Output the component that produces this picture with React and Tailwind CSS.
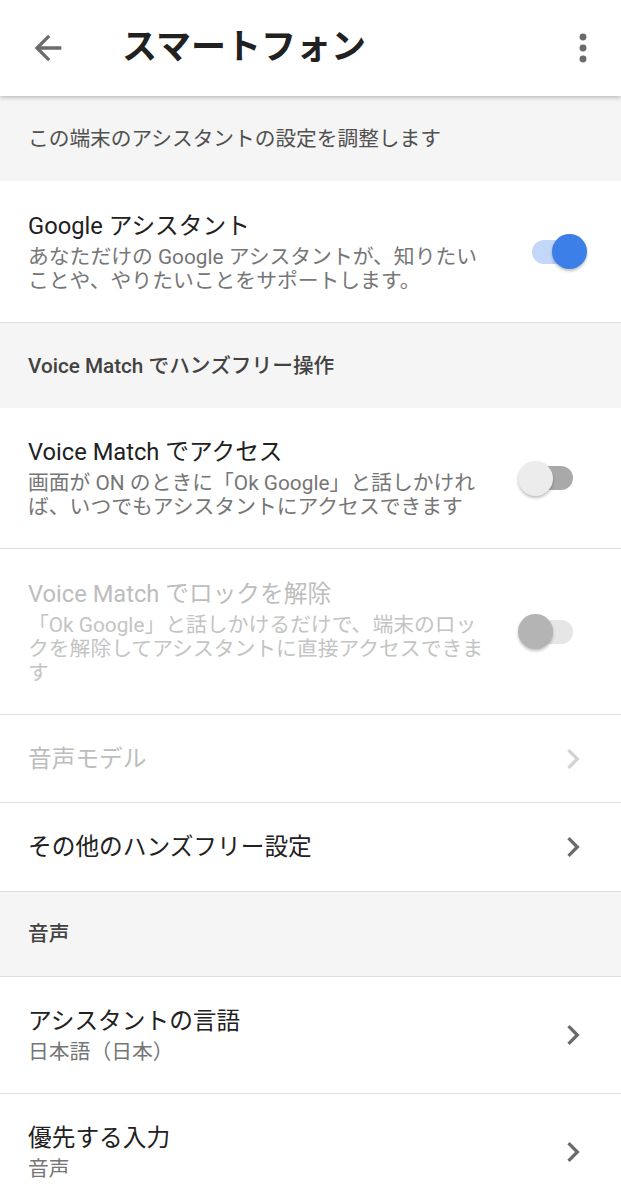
import React from "react";

const FONT = { fontFamily: 'Roboto, "Noto Sans CJK JP", "Noto Sans", sans-serif' };

function Toggle({ state }) {
  const track =
    state === "on" ? "bg-[#c3d7f9]" : state === "off" ? "bg-[#a9a9a9]" : "bg-[#e6e6e6]";
  const thumb =
    state === "on"
      ? "bg-[#3d7fe9] right-0"
      : state === "off"
      ? "bg-[#ececec] left-0"
      : "bg-[#b4b4b4] left-0";
  return (
    <div className="relative w-[69px] h-[35px] shrink-0 flex items-center">
      <div className={`mx-[14px] w-[41px] h-[24px] rounded-full ${track}`} />
      <div
        className={`absolute top-0 w-[35px] h-[35px] rounded-full shadow-[0_2px_3px_rgba(0,0,0,0.25)] ${thumb}`}
      />
    </div>
  );
}

function Chevron({ disabled }) {
  return (
    <svg
      width="40"
      height="40"
      viewBox="0 0 24 24"
      className={disabled ? "text-[#d2d2d2] shrink-0" : "text-[#6b6b6b] shrink-0"}
      fill="currentColor"
    >
      <path d="M10 6L8.59 7.41 13.17 12l-4.58 4.59L10 18l6-6z" />
    </svg>
  );
}

function Section({ children, medium, border }) {
  return (
    <div
      className={`h-[85px] bg-[#f5f5f5] flex items-center px-[28px] text-[20.7px] leading-[30px] ${
        medium ? "font-medium text-[#424242]" : "text-[#505050]"
      } ${border ? "border-b border-[#dedede]" : ""}`}
    >
      {children}
    </div>
  );
}

function Row({ h, title, lines, disabled, right }) {
  return (
    <div
      className={`${h} flex items-center justify-between border-b border-[#dedede] pl-[28px]`}
    >
      <div className="flex flex-col">
        <div
          className={`text-[23.7px] leading-[30px] whitespace-nowrap ${
            disabled ? "text-[#bdbdbd]" : "text-[#212121]"
          }`}
        >
          {title}
        </div>
        {lines && (
          <div
            className={`mt-[4px] text-[20.8px] leading-[24px] ${
              disabled ? "text-[#c4c4c4]" : "text-[#767676]"
            }`}
          >
            {lines.map((l, i) => (
              <div key={i} className="whitespace-nowrap">
                {l}
              </div>
            ))}
          </div>
        )}
      </div>
      {right}
    </div>
  );
}

export default function App() {
  return (
    <div className="w-[621px] h-[1200px] overflow-hidden bg-white" style={FONT}>
      <div className="relative z-10 h-[96px] bg-white flex items-center shadow-[0_2px_4px_rgba(0,0,0,0.22)]">
        <svg
          width="40"
          height="40"
          viewBox="0 0 24 24"
          className="ml-[28px] text-[#6b6b6b]"
          fill="currentColor"
        >
          <path d="M20 11H7.83l5.59-5.59L12 4l-8 8 8 8 1.41-1.41L7.83 13H20v-2z" />
        </svg>
        <div className="ml-[54px] text-[35px] leading-[40px] font-semibold text-[#212121] flex-1">
          スマートフォン
        </div>
        <svg
          width="44"
          height="44"
          viewBox="0 0 24 24"
          className="mr-[16px] text-[#6b6b6b]"
          fill="currentColor"
        >
          <circle cx="12" cy="6" r="1.9" />
          <circle cx="12" cy="12" r="1.9" />
          <circle cx="12" cy="18" r="1.9" />
        </svg>
      </div>

      <Section>この端末のアシスタントの設定を調整します</Section>

      <Row
        h="h-[142px]"
        title="Google アシスタント"
        lines={["あなただけの Google アシスタントが、知りたい", "ことや、やりたいことをサポートします。"]}
        right={
          <div className="pr-[34px]">
            <Toggle state="on" />
          </div>
        }
      />

      <Section medium>Voice Match でハンズフリー操作</Section>

      <Row
        h="h-[141px]"
        title="Voice Match でアクセス"
        lines={["画面が ON のときに「Ok Google」と話しかけれ", "ば、いつでもアシスタントにアクセスできます"]}
        right={
          <div className="pr-[34px]">
            <Toggle state="off" />
          </div>
        }
      />

      <Row
        h="h-[166px]"
        title="Voice Match でロックを解除"
        disabled
        lines={[
          "「Ok Google」と話しかけるだけで、端末のロッ",
          "クを解除してアシスタントに直接アクセスできま",
          "す",
        ]}
        right={
          <div className="pr-[34px]">
            <Toggle state="disabled" />
          </div>
        }
      />

      <Row
        h="h-[88px]"
        title="音声モデル"
        disabled
        right={
          <div className="pr-[28px]">
            <Chevron disabled />
          </div>
        }
      />

      <Row
        h="h-[89px]"
        title="その他のハンズフリー設定"
        right={
          <div className="pr-[28px]">
            <Chevron />
          </div>
        }
      />

      <Section medium border>
        音声
      </Section>

      <Row
        h="h-[117px]"
        title="アシスタントの言語"
        lines={["日本語（日本）"]}
        right={
          <div className="pr-[28px]">
            <Chevron />
          </div>
        }
      />

      <Row
        h="h-[117px]"
        title="優先する入力"
        lines={["音声"]}
        right={
          <div className="pr-[28px]">
            <Chevron />
          </div>
        }
      />
    </div>
  );
}
